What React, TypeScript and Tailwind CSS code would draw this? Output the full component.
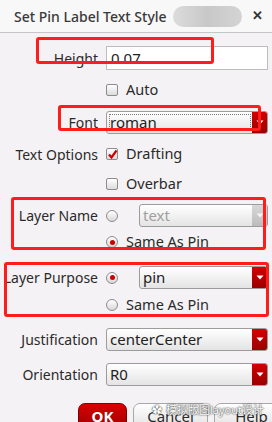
import React from "react";

const font = { fontFamily: '"Noto Sans", "Noto Sans CJK SC", sans-serif' };

const Arrow = ({ light }: { light?: boolean }) => (
  <svg width="8" height="5" viewBox="0 0 8 5">
    <path d="M0.5 0.5 L7.5 0.5 L4 4.5 Z" fill={light ? "#f4f4f4" : "#ffffff"} />
  </svg>
);

const Select = ({
  value,
  disabled,
  focused,
  className = "",
}: {
  value: string;
  disabled?: boolean;
  focused?: boolean;
  className?: string;
}) => (
  <div
    className={`flex h-[23px] items-stretch overflow-hidden rounded-[3px] border border-[#9c9c9c] bg-gradient-to-b from-white to-[#e4e4e4] ${className}`}
  >
    <div className="relative flex flex-1 items-center pl-[3px]">
      {focused && <div className="absolute inset-[2px] right-[1px] border border-dotted border-[#777]" />}
      <span className={`text-[15px] leading-none ${disabled ? "text-[#a0a0a0]" : "text-[#222]"}`}>{value}</span>
    </div>
    <div
      className={`flex w-[15px] items-center justify-center ${
        disabled ? "bg-gradient-to-b from-[#d8d8d8] to-[#bcbcbc]" : "bg-gradient-to-b from-[#d40000] to-[#9a0000]"
      }`}
    >
      <Arrow light={disabled} />
    </div>
  </div>
);

const Check = ({ checked }: { checked?: boolean }) => (
  <div className="relative h-[12px] w-[12px] rounded-[2px] border border-[#8c8c8c] bg-gradient-to-b from-white to-[#dcdcdc]">
    {checked && (
      <svg className="absolute left-[0px] top-[0px]" width="11" height="11" viewBox="0 0 11 11">
        <path d="M2 5.5 L4.5 8.5 L9.5 1.5" stroke="#cc0000" strokeWidth="2.2" fill="none" />
      </svg>
    )}
  </div>
);

const Radio = ({ on }: { on?: boolean }) => (
  <div className="flex h-[12px] w-[12px] items-center justify-center rounded-full border border-[#8c8c8c] bg-gradient-to-b from-white to-[#d8d8d8]">
    {on && <div className="h-[5px] w-[5px] rounded-full bg-[#cc0000]" />}
  </div>
);

const Label = ({ children }: { children: React.ReactNode }) => (
  <div className="w-[98px] shrink-0 whitespace-nowrap text-right text-[14px] text-[#2a2a2a]">{children}</div>
);

const Row = ({ children, className = "" }: { children: React.ReactNode; className?: string }) => (
  <div className={`flex items-center gap-[8px] pr-[4px] ${className}`}>{children}</div>
);

const Option = ({ children }: { children: React.ReactNode }) => (
  <span className="text-[14.5px] text-[#2a2a2a]">{children}</span>
);

export default function App() {
  return (
    <div className="relative h-[422px] w-[272px] overflow-hidden bg-[#f5f2f5]" style={font}>
      {/* title bar */}
      <div className="flex h-[33px] items-center whitespace-nowrap border-b border-[#c6c6c6] bg-[#f8f8f8] pl-[14px]">
        <span className="shrink-0 text-[14px] font-medium text-[#3a3a3a]">Set Pin Label Text Style</span>
        <div className="ml-[6px] h-[21px] w-[69px] shrink-0 rounded-full bg-gradient-to-r from-[#dcdcdc] via-[#c8c8c8] to-[#d4d4d4]" />
        <span className="ml-[10px] shrink-0 text-[13px] font-bold text-[#333]">✕</span>
      </div>

      <div className="flex flex-col">
        <Row className="mt-[13px] h-[24px]">
          <Label>Height</Label>
          <div className="flex h-[24px] flex-1 items-center border border-[#bdbdbd] bg-white pl-[4px] text-[15px] text-[#222]">
            0.07
          </div>
        </Row>
        <Row className="mt-[10px] h-[20px]">
          <div className="w-[98px]" />
          <Check />
          <Option>Auto</Option>
        </Row>
        <Row className="mt-[11px] h-[23px]">
          <Label>Font</Label>
          <Select value="roman" focused className="flex-1" />
        </Row>
        <Row className="mt-[10px] h-[20px]">
          <Label>Text Options</Label>
          <Check checked />
          <Option>Drafting</Option>
        </Row>
        <Row className="mt-[10px] h-[20px]">
          <div className="w-[98px]" />
          <Check />
          <Option>Overbar</Option>
        </Row>
        <Row className="mt-[10px] h-[23px]">
          <Label>Layer Name</Label>
          <Radio />
          <Select value="text" disabled className="ml-[13px] flex-1" />
        </Row>
        <Row className="mt-[5px] h-[20px]">
          <div className="w-[98px]" />
          <Radio on />
          <Option>Same As Pin</Option>
        </Row>
        <Row className="mt-[14px] h-[23px]">
          <Label>Layer Purpose</Label>
          <Radio on />
          <Select value="pin" className="ml-[13px] flex-1" />
        </Row>
        <Row className="mt-[6px] h-[20px]">
          <div className="w-[98px]" />
          <Radio />
          <Option>Same As Pin</Option>
        </Row>
        <Row className="mt-[13px] h-[23px]">
          <Label>Justification</Label>
          <Select value="centerCenter" className="flex-1" />
        </Row>
        <Row className="mt-[12px] h-[23px]">
          <Label>Orientation</Label>
          <Select value="R0" className="flex-1" />
        </Row>
        <div className="mt-[17px] flex gap-[6px] pl-[78px]">
          <div className="flex h-[26px] w-[49px] shrink-0 items-center justify-center rounded-[7px] border border-[#800000] bg-gradient-to-b from-[#d80000] to-[#a00000] text-[15px] font-bold text-white">
            <span className="underline underline-offset-2">O</span>K
          </div>
          <div className="flex h-[26px] w-[75px] shrink-0 items-center justify-center rounded-[7px] border border-[#a8a8a8] bg-gradient-to-b from-white to-[#e2e2e2] text-[15px] text-[#2a2a2a]">
            <span className="underline underline-offset-2">C</span>ancel
          </div>
          <div className="flex h-[26px] w-[75px] shrink-0 items-center justify-center rounded-[7px] border border-[#a8a8a8] bg-gradient-to-b from-white to-[#e2e2e2] text-[15px] text-[#2a2a2a]">
            <span className="underline underline-offset-2">H</span>elp
          </div>
        </div>
      </div>

      {/* watermark */}
      <div className="absolute left-[152px] top-[402px] flex items-center gap-[4px] whitespace-nowrap text-[11px] text-white [text-shadow:0_0_2px_#444,0_0_1px_#444]">
        <span className="text-[10px]">✿</span>
        <span>模拟版图layout设计</span>
      </div>

      {/* red annotation boxes */}
      <div className="pointer-events-none absolute left-[36px] top-[37px] h-[27px] w-[178px] rounded-[3px] border-[3px] border-[#ff1c1c]" />
      <div className="pointer-events-none absolute left-[58px] top-[105px] h-[26px] w-[203px] rounded-[3px] border-[3px] border-[#ff1c1c]" />
      <div className="pointer-events-none absolute left-[11px] top-[197px] h-[53px] w-[255px] rounded-[3px] border-[3px] border-[#ff1c1c]" />
      <div className="pointer-events-none absolute left-[4px] top-[262px] h-[55px] w-[265px] rounded-[3px] border-[3px] border-[#ff1c1c]" />
    </div>
  );
}
